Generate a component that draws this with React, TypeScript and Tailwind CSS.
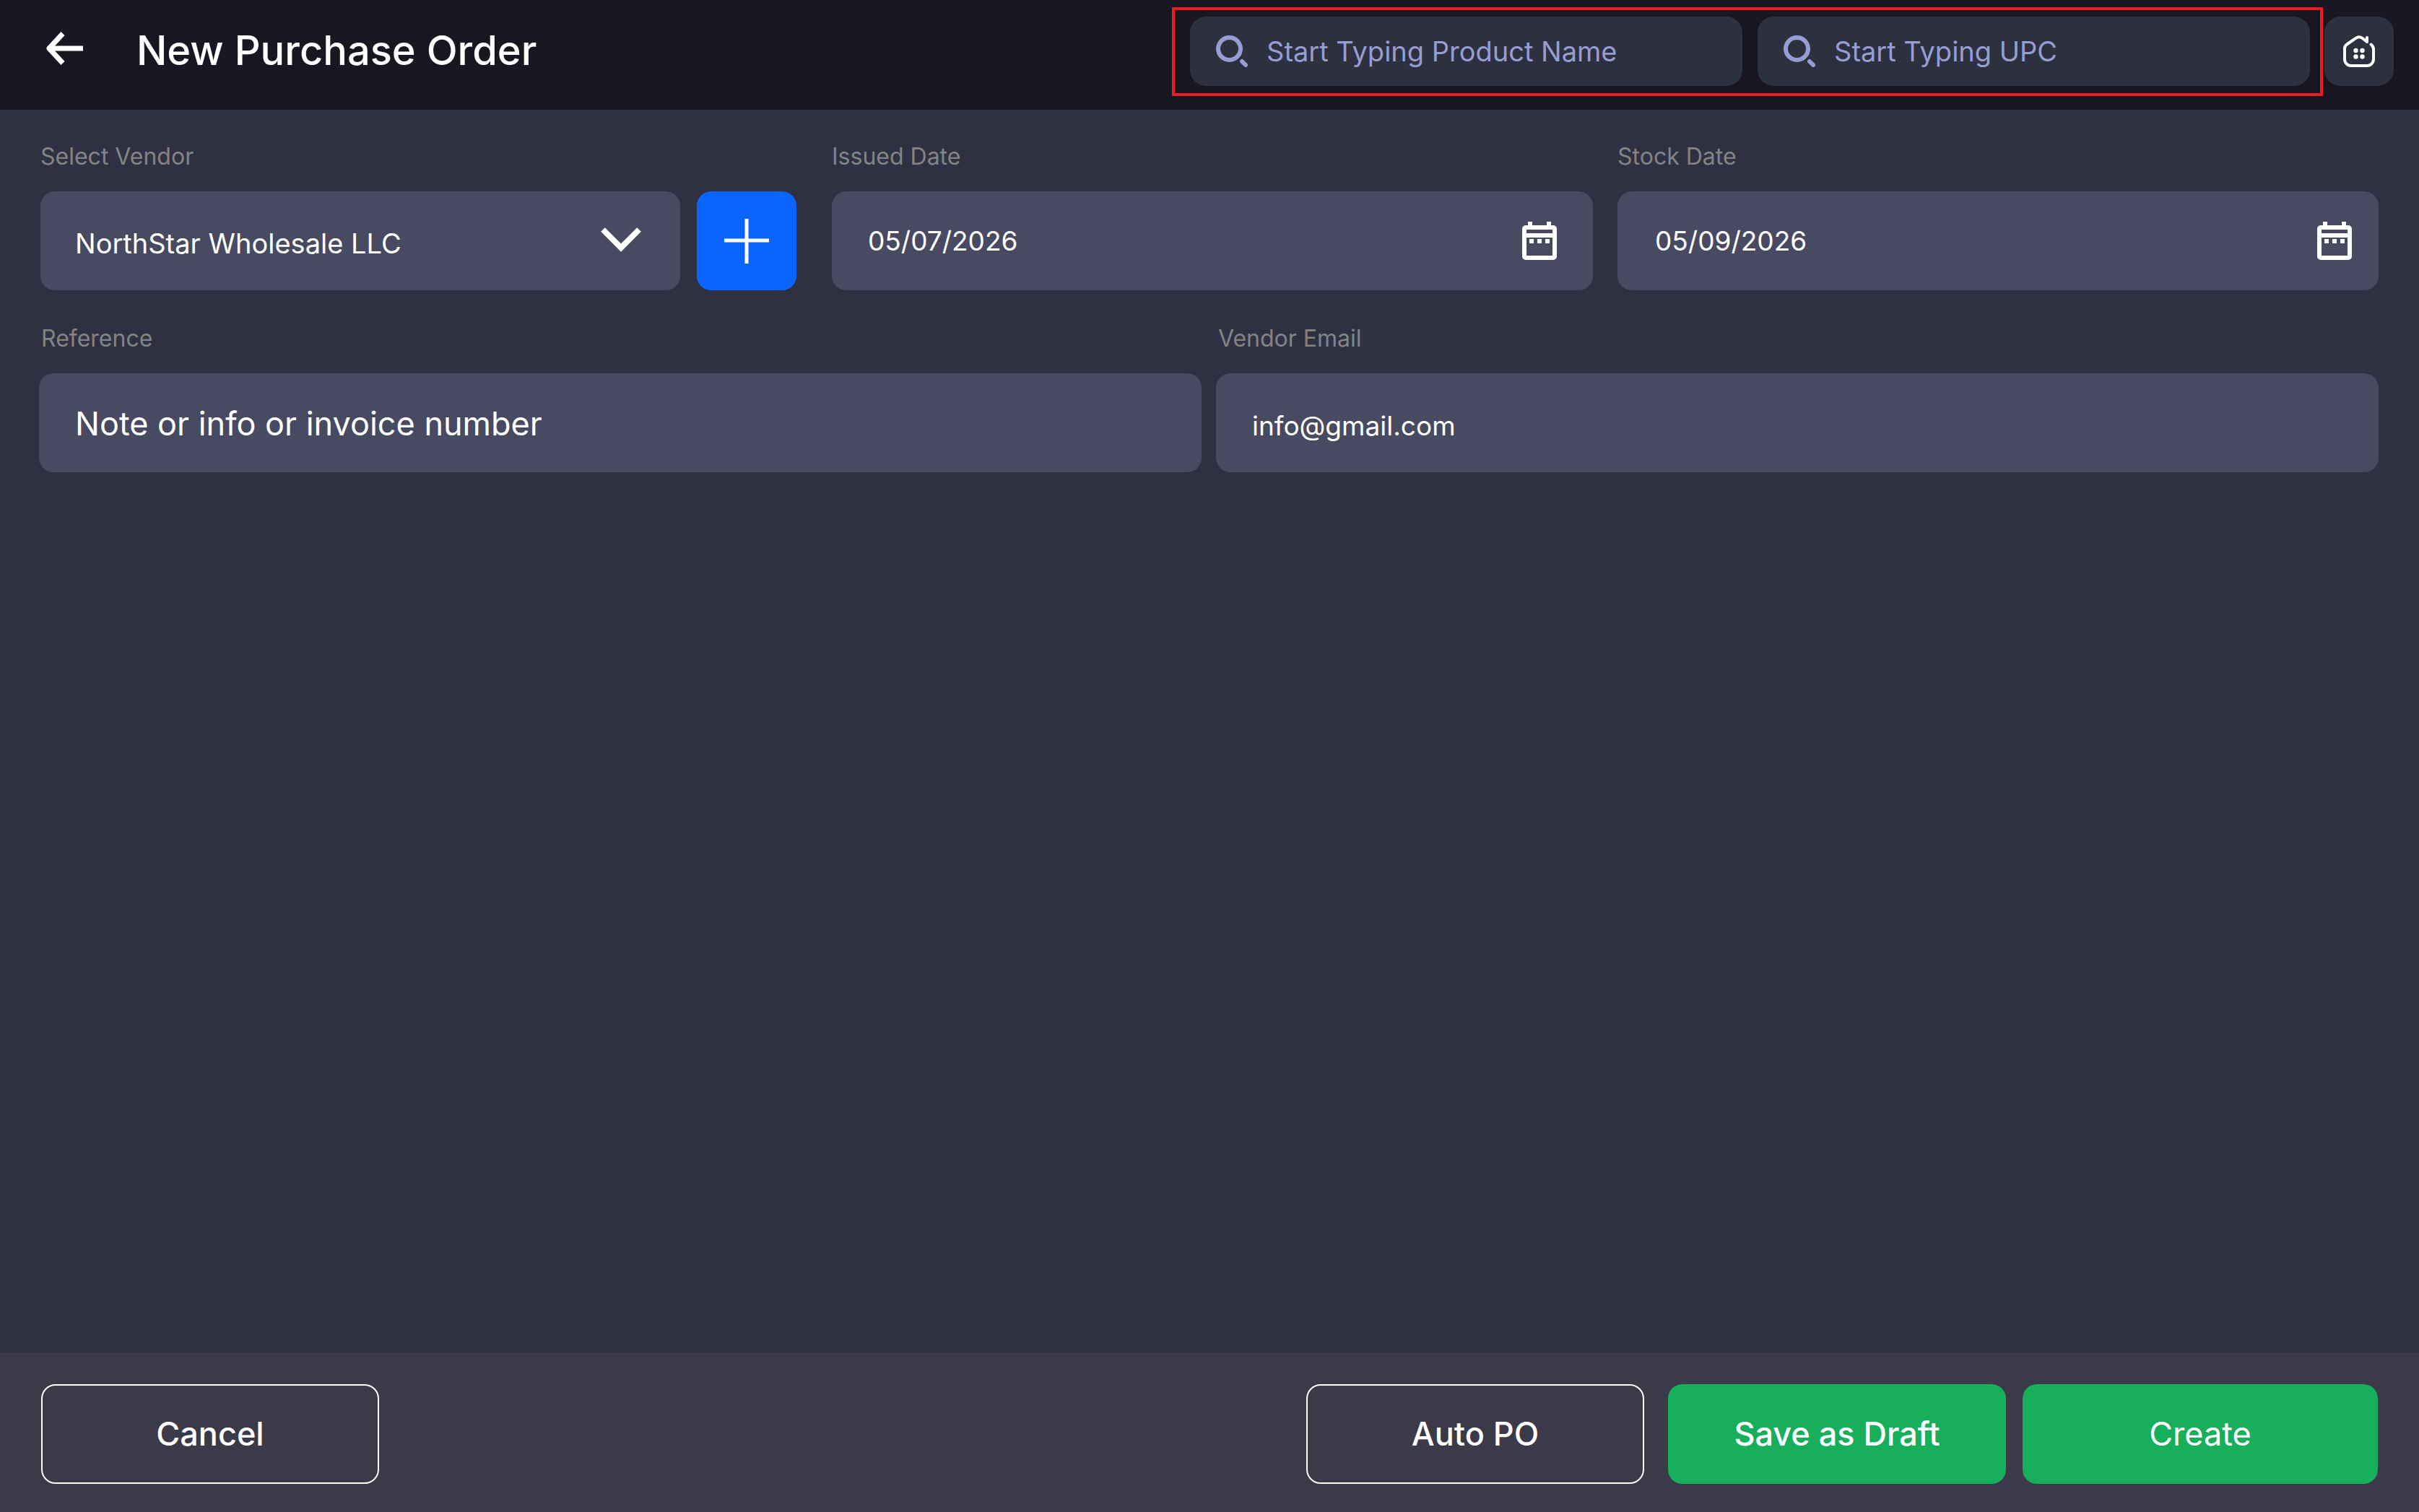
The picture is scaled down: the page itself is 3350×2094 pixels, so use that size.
import React, { useState } from "react";

interface ISearchBox {
  id: string;
  label: string;
}

interface IDateField {
  id: string;
  label: string;
  initial: string;
  spacing: string;
}

const labelStyle = "text-[32px] leading-[40px] text-[#838383]";
const boxStyle = "h-[137px] w-full rounded-[20px] bg-[#474a60] text-white";

function SearchIcon() {
  return (
    <svg className="h-11 w-11 shrink-0" viewBox="0 0 44 44" fill="none" stroke="currentColor" strokeWidth="6">
      <circle cx="18.5" cy="18.5" r="15.5" />
      <path d="M36 36L41 41" strokeLinecap="round" />
    </svg>
  );
}

function CalendarIcon() {
  return (
    <svg className="h-[53px] w-12" viewBox="0 0 48 53" fill="currentColor">
      <path d="M8 0h6v6H8zM34 0h6v6h-6z" />
      <path
        fillRule="evenodd"
        d="M5 5H43A5 5 0 0 1 48 10V48A5 5 0 0 1 43 53H5A5 5 0 0 1 0 48V10A5 5 0 0 1 5 5ZM6 11V16H42V11ZM6 22V47H42V22Z"
      />
      <path d="M10 24h6v6h-6zM21 24h6v6h-6zM32 24h6v6h-6z" />
    </svg>
  );
}

function HomeIcon() {
  return (
    <svg className="h-11 w-11" viewBox="0 0 44 44" fill="none" stroke="currentColor" strokeWidth="4" strokeLinecap="round" strokeLinejoin="round">
      <path d="M38.5 12.5C41 14.5 42 16.5 42 19V33C42 38 38 42 33 42H11C6 42 2 38 2 33V18C2 16 3 14 5 12.5L17.5 3.8C20.5 1.7 23.5 1.7 26.5 3.8L33 9V3" />
      <g fill="currentColor" stroke="none">
        <circle cx="17.5" cy="21" r="3.2" />
        <circle cx="26.5" cy="21" r="3.2" />
        <circle cx="17.5" cy="29.5" r="3.2" />
        <circle cx="26.5" cy="29.5" r="3.2" />
      </g>
    </svg>
  );
}

function SearchBox({ id, label }: ISearchBox) {
  return (
    <div className="flex h-24 w-[765px] min-w-0 items-center gap-[26px] rounded-[22px] bg-[#2d303f] px-9 text-[#959dd2]">
      <SearchIcon />
      <input
        id={id}
        type="text"
        aria-label={label}
        placeholder={label}
        autoComplete="off"
        className="w-full min-w-0 bg-transparent text-[38px] leading-[48px] outline-none placeholder:text-[#959dd2]"
      />
    </div>
  );
}

function DateField({ id, label, initial, spacing }: IDateField) {
  const [value, set_value] = useState<string>(initial);
  return (
    <div className="flex min-w-0 flex-col gap-7">
      <label htmlFor={id} className={labelStyle}>{label}</label>
      <div className={`${boxStyle} flex items-center ${spacing}`}>
        <input
          id={id}
          type="text"
          value={value}
          onChange={(e) => set_value(e.target.value)}
          className="min-w-0 flex-1 bg-transparent text-[37px] leading-[48px] outline-none"
        />
        <button type="button" aria-label={`Pick ${label}`}>
          <CalendarIcon />
        </button>
      </div>
    </div>
  );
}

function App() {
  const [vendor, set_vendor] = useState<string>("NorthStar Wholesale LLC");
  const [reference, set_reference] = useState<string>("");
  const [email, set_email] = useState<string>("info@gmail.com");

  return (
    <div className="flex min-h-screen flex-col bg-[#2f3142] font-['Inter',sans-serif] text-white">
      <header className="flex items-center bg-[#191622] pt-[10px] pr-[35px] pb-[19px] pl-[63px]">
        <div className="flex flex-1 items-center gap-[74px] pb-1">
          <button type="button" aria-label="Back" className="pb-1.5">
            <svg className="h-[46px] w-[52px]" viewBox="0 0 52 46" fill="none" stroke="currentColor" strokeWidth="7">
              <path d="M52 23H6" />
              <path d="M24 2.5L5 23L24 43.5" strokeLinejoin="round" />
            </svg>
          </button>
          <h1 className="text-[56px] leading-[64px] font-medium whitespace-nowrap">New Purchase Order</h1>
        </div>
        <div className="flex items-start gap-0.5">
          <div className="flex gap-[21px] border-4 border-[#ed1c24] pt-[9px] pr-[14px] pb-[10px] pl-[21px]">
            <SearchBox id="product" label="Start Typing Product Name" />
            <SearchBox id="upc" label="Start Typing UPC" />
          </div>
          <button type="button" aria-label="Home" className="mt-[13px] flex h-24 w-24 items-center justify-center rounded-[22px] bg-[#2d303f]">
            <HomeIcon />
          </button>
        </div>
      </header>

      <main className="flex flex-1 flex-col gap-[47px] pt-[45px] pr-14">
        <div className="grid grid-cols-[1062fr_1054fr_1054fr] gap-x-[34px] pl-14">
          <div className="flex min-w-0 flex-col gap-7 pr-[15px]">
            <label htmlFor="vendor" className={labelStyle}>Select Vendor</label>
            <div className="flex gap-[23px]">
              <div className="relative flex-1">
                <select
                  id="vendor"
                  value={vendor}
                  onChange={(e) => set_vendor(e.target.value)}
                  className={`${boxStyle} appearance-none pt-2 pl-12 text-[38px] outline-none`}
                >
                  <option>NorthStar Wholesale LLC</option>
                </select>
                <svg className="pointer-events-none absolute top-[50px] right-[54px] h-[34px] w-14" viewBox="0 0 56 34" fill="none" stroke="currentColor" strokeWidth="8">
                  <path d="M3 3L28 28L53 3" />
                </svg>
              </div>
              <button type="button" aria-label="Add vendor" className="flex h-[137px] w-[138px] items-center justify-center rounded-[20px] bg-[#0b64fb]">
                <svg className="h-[62px] w-[62px]" viewBox="0 0 62 62" stroke="currentColor" strokeWidth="5">
                  <path d="M31 0V62M0 30H62" />
                </svg>
              </button>
            </div>
          </div>
          <DateField id="issued" label="Issued Date" initial="05/07/2026" spacing="pr-[50px] pl-[50px]" />
          <DateField id="stock" label="Stock Date" initial="05/09/2026" spacing="pr-[37px] pl-[52px]" />
        </div>

        <div className="grid grid-cols-2 gap-x-5 pl-[54px]">
          <div className="flex min-w-0 flex-col gap-7">
            <label htmlFor="reference" className={`${labelStyle} pl-[3px]`}>Reference</label>
            <input
              id="reference"
              type="text"
              value={reference}
              onChange={(e) => set_reference(e.target.value)}
              placeholder="Note or info or invoice number"
              className={`${boxStyle} px-[50px] pt-0.5 text-[45px] outline-none placeholder:text-white`}
            />
          </div>
          <div className="flex min-w-0 flex-col gap-7">
            <label htmlFor="email" className={`${labelStyle} pl-[3px]`}>Vendor Email</label>
            <input
              id="email"
              type="email"
              value={email}
              onChange={(e) => set_email(e.target.value)}
              className={`${boxStyle} px-[50px] pt-2 text-[37px] outline-none`}
            />
          </div>
        </div>
      </main>

      <footer className="flex bg-[#3a3a49] px-[57px] pt-11 pb-[39px] text-[45px] font-medium">
        <button type="button" className="h-[138px] w-[468px] rounded-[20px] border-2 border-white">Cancel</button>
        <button type="button" className="ml-auto h-[138px] w-[468px] rounded-[20px] border-2 border-white">Auto PO</button>
        <button type="button" className="ml-[33px] h-[138px] w-[468px] rounded-[20px] bg-[#17ae5c]">Save as Draft</button>
        <button type="button" className="ml-[23px] h-[138px] w-[492px] rounded-[20px] bg-[#17ae5c] font-normal">Create</button>
      </footer>
    </div>
  );
}

export default App;
